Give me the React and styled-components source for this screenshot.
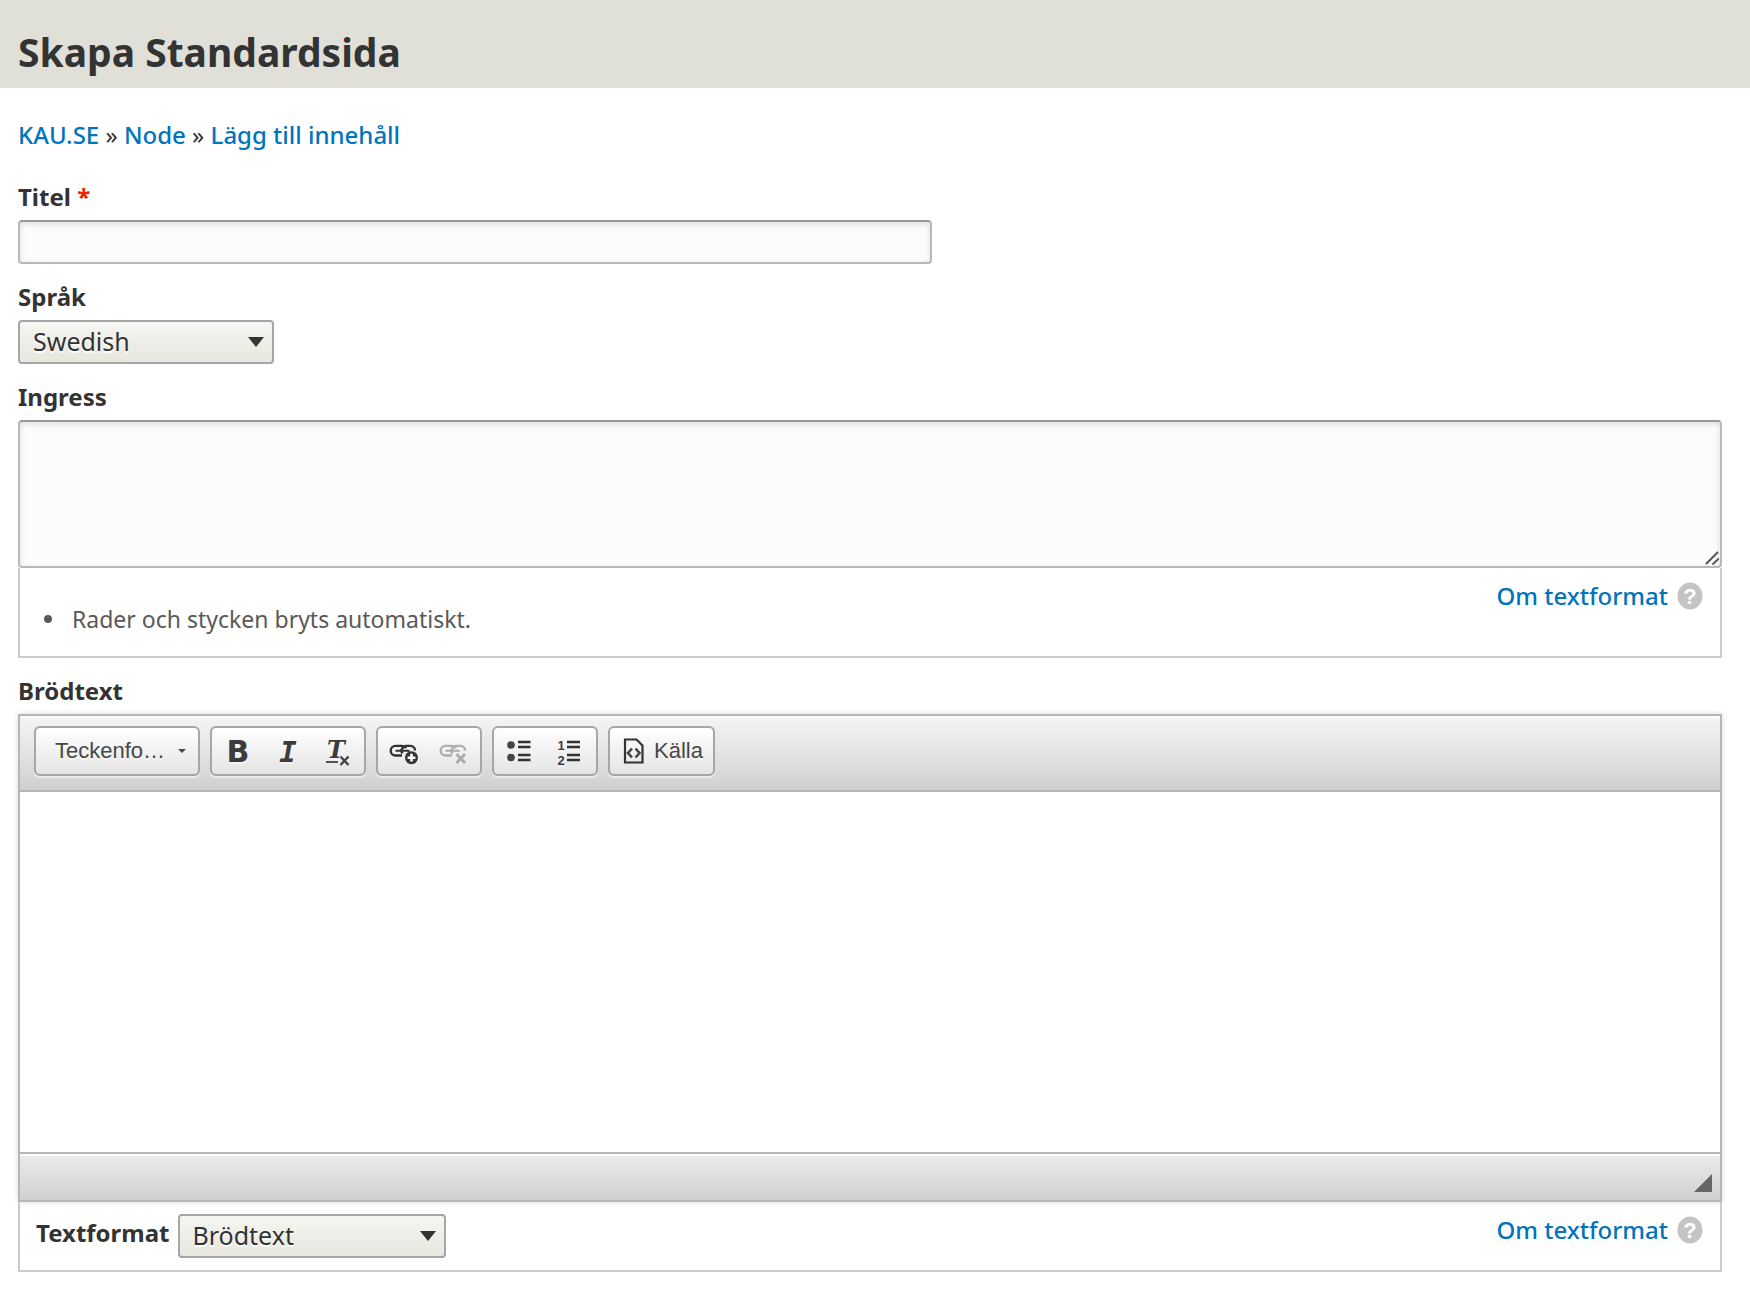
import { useState } from "react";
import styled, { createGlobalStyle, css } from "styled-components";

const GlobalStyle = createGlobalStyle`
*{
    box-sizing:border-box;
}
body{
    margin:0;
    background:#ffffff;
    color:#333333;
    font-family:"Noto Sans","Open Sans",sans-serif;
    font-size:24px;
    line-height:30px;
}
`
const Header = styled.header`
background:#e0e0d8;
padding:28px 18px 12px;
`
const PageTitle = styled.h1`
margin:0;
font-size:39px;
line-height:48px;
font-weight:bold;
`
const Content = styled.main`
padding:32px 28px 20px 18px;
`
const Link = styled.a`
color:#0074bd;
font-weight:500;
text-decoration:none;
&:hover{
    text-decoration:underline;
}
`
const Breadcrumb = styled.nav`
margin-bottom:32px;
`
const Form = styled.form`
display:flex;
flex-direction:column;
gap:18px;
`
const Field = styled.div`
display:flex;
flex-direction:column;
align-items:flex-start;
gap:8px;
`
const Label = styled.label`
font-weight:bold;
`
const Required = styled.span`
color:#ee2200;
`
const fieldBox = css`
display:block;
width:100%;
border:2px solid #b8b8b8;
border-top-color:#999999;
border-radius:4px;
background:#fcfcfa;
box-shadow:inset 0 2px 6px rgba(0,0,0,0.12);
color:#333333;
font:inherit;
padding:4px 12px;
`
const TextInput = styled.input`
${fieldBox}
max-width:914px;
height:44px;
`
const TextArea = styled.textarea`
${fieldBox}
height:148px;
resize:none;
`
const Stack = styled.div`
width:100%;
`
const AreaWrap = styled.div`
position:relative;
svg{
    position:absolute;
    right:3px;
    bottom:3px;
    pointer-events:none;
}
`
const SelectWrap = styled.div`
position:relative;
width:${props => props.$width};
max-width:100%;
&::after{
    content:"";
    position:absolute;
    right:10px;
    top:17px;
    border:8px solid transparent;
    border-top:10px solid #333333;
    border-bottom:0;
    pointer-events:none;
}
`
const Select = styled.select`
appearance:none;
display:block;
width:100%;
height:44px;
padding:0 32px 2px 13px;
border:2px solid #a6a6a6;
border-radius:4px;
background:linear-gradient(#f6f6f3,#e7e7df);
color:#333333;
font:inherit;
font-size:25px;
text-shadow:0 2px #ffffff;
`
const FormatBox = styled.div`
display:flex;
justify-content:space-between;
align-items:flex-start;
border:2px solid #cccccc;
border-top:0;
padding:12px 17px 12px 16px;
`
const Tips = styled.ul`
margin:24px 0 10px;
padding:0 0 0 8px;
list-style:none;
color:#595959;
font-size:23px;
li{
    display:flex;
    align-items:center;
    gap:20px;
}
li::before{
    content:"";
    width:8px;
    height:8px;
    border-radius:50%;
    background:#595959;
}
`
const FormatPicker = styled.div`
display:flex;
gap:8px;
label{
    line-height:38px;
}
`
const HelpLink = styled(Link)`
display:flex;
align-items:center;
gap:9px;
line-height:32px;
`
const Editor = styled.div`
width:100%;
border:2px solid #b6b6b6;
box-shadow:0 0 6px rgba(0,0,0,0.15);
`
const Toolbar = styled.div`
display:flex;
flex-wrap:wrap;
gap:10px;
padding:10px 14px 14px;
border-bottom:2px solid #b6b6b6;
background:linear-gradient(#f5f5f5,#cfd1cf);
box-shadow:inset 0 2px #ffffff;
`
const Group = styled.div`
display:flex;
height:50px;
padding:0 1px;
border:2px solid #a6a6a6;
border-radius:6px;
background:linear-gradient(#ffffff,#e4e4e4);
box-shadow:0 2px rgba(255,255,255,0.5);
`
const ToolButton = styled.button`
display:flex;
align-items:center;
justify-content:center;
min-width:50px;
gap:${props => props.$gap ?? "0"};
padding:${props => props.$pad ?? "0"};
border:0;
background:none;
color:#474747;
font-family:"Liberation Sans",Arial,sans-serif;
font-size:22px;
line-height:26px;
text-shadow:0 2px rgba(255,255,255,0.5);
&:disabled{
    opacity:0.35;
}
`
const EditArea = styled.div`
height:360px;
padding:20px;
outline:0;
`
const EditorFooter = styled.div`
display:flex;
justify-content:flex-end;
align-items:flex-end;
height:48px;
padding:8px;
border-top:2px solid #b6b6b6;
background:linear-gradient(#ebebeb,#cfd1cf);
box-shadow:inset 0 2px #ffffff;
`

// 32px drawing with 6px of room on every side
const Icon = ({ children }) => (
    <svg width="44" height="44" viewBox="-6 -6 44 44" fill="none" stroke="#333" strokeWidth="2.4" aria-hidden="true">
        {children}
    </svg>
)
const Glyph = styled.text`
fill:#3c3c3c;
stroke:none;
font-weight:bold;
text-anchor:middle;
`
const BoldIcon = () => (
    <Icon>
        <Glyph x="16" y="27" fontSize="30" fontFamily="DejaVu Sans" stroke="#3c3c3c">B</Glyph>
    </Icon>
)
const ItalicIcon = () => (
    <Icon>
        <Glyph x="16" y="27" fontSize="29" fontFamily="DejaVu Sans Mono" fontStyle="italic">I</Glyph>
    </Icon>
)
const RemoveFormatIcon = () => (
    <Icon>
        <Glyph x="14" y="23" fontSize="24" fontFamily="DejaVu Serif" fontStyle="italic">T</Glyph>
        <path d="M4 27h12" stroke="#555" strokeWidth="2" />
        <path d="M18.5 21.500l8 8.500M26.500 21.500l-8 8.500" stroke="#444" strokeWidth="2.4" />
    </Icon>
)
const Chain = () => (
    <>
        <path d="M14 20.500H7.500a4.800 4.800 0 0 1 0-9.600h6.500a4.800 4.800 0 0 1 4 2.300" />
        <path d="M14.500 18.500a4.500 4.500 0 0 1 0-5.500a4.800 4.800 0 0 1 3.500-2.100h4.500a4.800 4.800 0 0 1 4.600 4.600" />
        <path d="M7.500 15.700h12.500a1.600 1.600 0 0 1 1.500 1" strokeWidth="2" />
    </>
)
const LinkIcon = () => (
    <Icon>
        <Chain />
        <circle cx="23.5" cy="22.700" r="6.500" fill="#333" stroke="none" />
        <path d="M23.500 18.800v7.800M19.600 22.700h7.800" stroke="#fff" strokeWidth="2.6" />
    </Icon>
)
const UnlinkIcon = () => (
    <Icon>
        <Chain />
        <path d="M18.500 19l8.500 9M27 19l-8.500 9" strokeWidth="2.8" />
    </Icon>
)
const BulletIcon = () => (
    <Icon>
        <circle cx="7" cy="10" r="3.800" fill="#444" stroke="none" />
        <circle cx="7" cy="22.500" r="3.800" fill="#444" stroke="none" />
        <path d="M14 7h12.500M14 12h12.500M14 20h12.500M14 25h12.500" />
    </Icon>
)
const NumberIcon = () => (
    <Icon>
        <Glyph x="7" y="15" fontSize="13" fontFamily="Liberation Sans">1</Glyph>
        <Glyph x="7" y="30" fontSize="13" fontFamily="Liberation Sans">2</Glyph>
        <path d="M13 7h13M13 12h13M13 20h13M13 25h13" />
    </Icon>
)
const SourceIcon = () => (
    <svg width="22" height="26" viewBox="0 0 22 26" fill="none" stroke="#333" strokeWidth="2.2" aria-hidden="true">
        <path d="M2 1.500h11.500l6 6v17H2z" />
        <path d="M9 10.500l-4 4.500 4 4.500M12.500 10.500l4 4.500-4 4.500" stroke="#444" strokeWidth="2.6" />
    </svg>
)
const HelpIcon = () => (
    <svg width="26" height="28" viewBox="0 0 26 28" aria-hidden="true">
        <ellipse cx="13" cy="14" rx="12.500" ry="13.500" fill="#c4c4c4" />
        <text x="13" y="22" fontSize="22" fontWeight="bold" fontFamily="Liberation Sans" textAnchor="middle" fill="#fff">?</text>
    </svg>
)

const crumbs = [
    { title: "KAU.SE", link: "#home" },
    { title: "Node", link: "#node" },
    { title: "Lägg till innehåll", link: "#add" },
]
const tools = [
    [
        { title: "Fet", icon: <BoldIcon /> },
        { title: "Kursiv", icon: <ItalicIcon /> },
        { title: "Radera formatering", icon: <RemoveFormatIcon /> },
    ],
    [
        { title: "Infoga länk", icon: <LinkIcon /> },
        { title: "Radera länk", icon: <UnlinkIcon />, disabled: true },
    ],
    [
        { title: "Punktlista", icon: <BulletIcon /> },
        { title: "Numrerad lista", icon: <NumberIcon /> },
    ],
]

const AboutFormats = () => (
    <HelpLink href="#filter-tips">
        Om textformat
        <HelpIcon />
    </HelpLink>
)

const App = () => {
    const [language, setLanguage] = useState("sv");
    const [format, setFormat] = useState("body");

    return (
        <>
            <GlobalStyle />
            <Header>
                <PageTitle>Skapa Standardsida</PageTitle>
            </Header>
            <Content>
                <Breadcrumb>
                    {crumbs.map((item, idx) => (
                        <span key={item.link}>
                            {idx > 0 && " » "}
                            <Link href={item.link}>{item.title}</Link>
                        </span>
                    ))}
                </Breadcrumb>
                <Form onSubmit={(e) => e.preventDefault()}>
                    <Field>
                        <Label htmlFor="title">Titel <Required>*</Required></Label>
                        <TextInput id="title" type="text" required />
                    </Field>
                    <Field>
                        <Label htmlFor="language">Språk</Label>
                        <SelectWrap $width="256px">
                            <Select id="language" value={language} onChange={(e) => setLanguage(e.target.value)}>
                                <option value="sv">Swedish</option>
                                <option value="en">English</option>
                            </Select>
                        </SelectWrap>
                    </Field>
                    <Field>
                        <Label htmlFor="ingress">Ingress</Label>
                        <Stack>
                            <AreaWrap>
                                <TextArea id="ingress" />
                                <svg width="14" height="14" viewBox="0 0 14 14" stroke="#555" strokeWidth="2" aria-hidden="true">
                                    <path d="M1 13L13 1M7.500 13.500L14 7.500" />
                                </svg>
                            </AreaWrap>
                            <FormatBox>
                                <Tips>
                                    <li>Rader och stycken bryts automatiskt.</li>
                                </Tips>
                                <AboutFormats />
                            </FormatBox>
                        </Stack>
                    </Field>
                    <Field>
                        <Label as="span" id="body-label">Brödtext</Label>
                        <Stack>
                            <Editor>
                                <Toolbar role="toolbar" aria-label="Redigeringsverktyg">
                                    <Group>
                                        <ToolButton type="button" $gap="13px" $pad="0 11px 0 18px">
                                            Teckenfo…
                                            <svg width="8" height="4" viewBox="0 0 8 4" aria-hidden="true">
                                                <path d="M0 0h8L4 4z" fill="#474747" />
                                            </svg>
                                        </ToolButton>
                                    </Group>
                                    {tools.map((group, idx) => (
                                        <Group key={idx}>
                                            {group.map((item) => (
                                                <ToolButton key={item.title} type="button" aria-label={item.title} disabled={item.disabled}>
                                                    {item.icon}
                                                </ToolButton>
                                            ))}
                                        </Group>
                                    ))}
                                    <Group>
                                        <ToolButton type="button" $gap="9px" $pad="0 9px 0 12px">
                                            <SourceIcon />
                                            Källa
                                        </ToolButton>
                                    </Group>
                                </Toolbar>
                                <EditArea contentEditable suppressContentEditableWarning role="textbox" aria-multiline="true" aria-labelledby="body-label" />
                                <EditorFooter>
                                    <svg width="18" height="18" viewBox="0 0 18 18" aria-hidden="true">
                                        <path d="M0 18L18 0v18z" fill="#666" />
                                    </svg>
                                </EditorFooter>
                            </Editor>
                            <FormatBox>
                                <FormatPicker>
                                    <Label htmlFor="format">Textformat</Label>
                                    <SelectWrap $width="268px">
                                        <Select id="format" value={format} onChange={(e) => setFormat(e.target.value)}>
                                            <option value="body">Brödtext</option>
                                            <option value="plain">Ren text</option>
                                        </Select>
                                    </SelectWrap>
                                </FormatPicker>
                                <AboutFormats />
                            </FormatBox>
                        </Stack>
                    </Field>
                </Form>
            </Content>
        </>
    )
}
export default App;
